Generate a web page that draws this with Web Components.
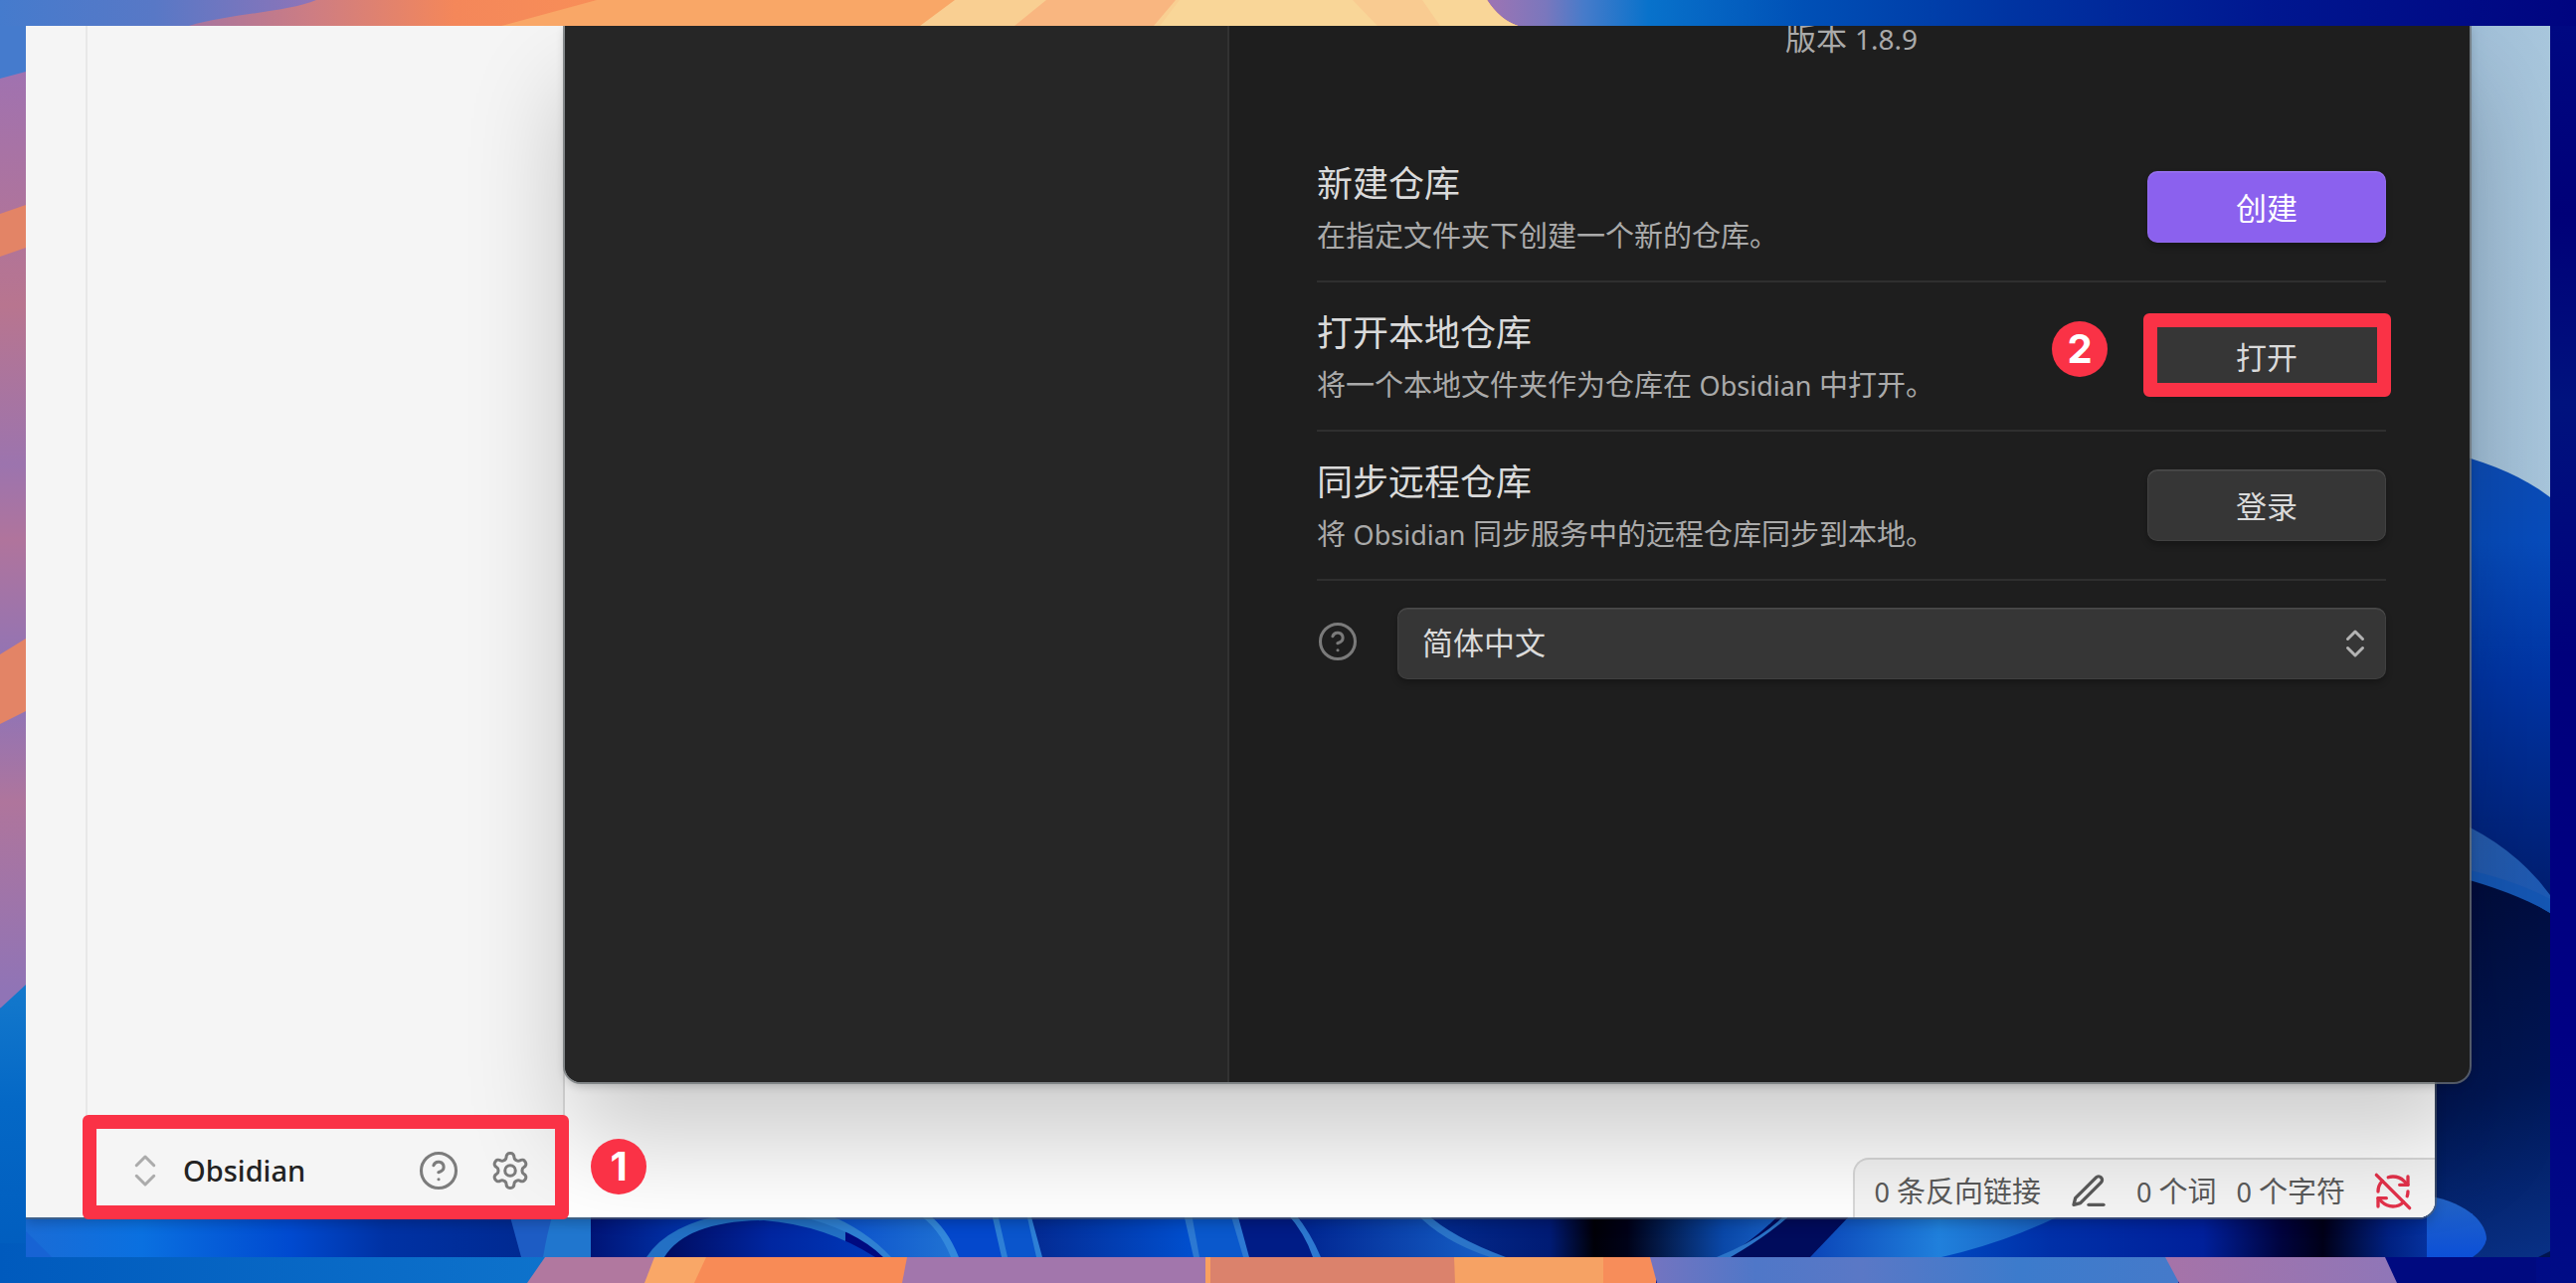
<!DOCTYPE html>
<html lang="zh-CN">
<head>
<meta charset="utf-8">
<title>Obsidian</title>
<style>
html, body { margin: 0; height: 100%; }
body { font-family: "Noto Sans", "Noto Sans CJK SC", sans-serif; overflow: hidden; background: #000a80; }
</style>
</head>
<body>
<desk-stage>
  <light-window slot="windows"></light-window>
  <vault-dialog slot="windows"></vault-dialog>
</desk-stage>

<script>
const ICONS = {
  updown: '<path d="m7 15 5 5 5-5"/><path d="m7 9 5-5 5 5"/>',
  help: '<circle cx="12" cy="12" r="10"/><path d="M9.09 9a3 3 0 0 1 5.83 1c0 2-3 3-3 3"/><path d="M12 17h.01"/>',
  settings: '<path d="M12.22 2h-.44a2 2 0 0 0-2 2v.18a2 2 0 0 1-1 1.73l-.43.25a2 2 0 0 1-2 0l-.15-.08a2 2 0 0 0-2.73.73l-.22.38a2 2 0 0 0 .73 2.73l.15.1a2 2 0 0 1 1 1.72v.51a2 2 0 0 1-1 1.74l-.15.09a2 2 0 0 0-.73 2.73l.22.38a2 2 0 0 0 2.73.73l.15-.08a2 2 0 0 1 2 0l.43.25a2 2 0 0 1 1 1.73V20a2 2 0 0 0 2 2h.44a2 2 0 0 0 2-2v-.18a2 2 0 0 1 1-1.73l.43-.25a2 2 0 0 1 2 0l.15.08a2 2 0 0 0 2.73-.73l.22-.39a2 2 0 0 0-.73-2.73l-.15-.08a2 2 0 0 1-1-1.74v-.5a2 2 0 0 1 1-1.74l.15-.09a2 2 0 0 0 .73-2.73l-.22-.38a2 2 0 0 0-2.73-.73l-.15.08a2 2 0 0 1-2 0l-.43-.25a2 2 0 0 1-1-1.73V4a2 2 0 0 0-2-2z"/><circle cx="12" cy="12" r="3"/>',
  pencil: '<path d="M12 20h9"/><path d="M16.5 3.5a2.12 2.12 0 0 1 3 3L7 19l-4 1 1-4Z"/>',
  syncoff: '<path d="M21 8L18.74 5.74A9.75 9.75 0 0 0 12 3C11 3 10.03 3.16 9.13 3.47"/><path d="M8 16H3v5"/><path d="M3 12C3 9.51 4 7.26 5.64 5.64"/><path d="m3 16 2.26 2.26A9.75 9.75 0 0 0 12 21c2.49 0 4.74-1 6.36-2.64"/><path d="M21 12c0 1-.16 1.97-.47 2.87"/><path d="M21 3v5h-5"/><path d="M22 22 2 2"/>'
};

function define(name, html, setup) {
  customElements.define(name, class extends HTMLElement {
    connectedCallback() {
      if (this.shadowRoot) return;
      const t = document.createElement('template');
      t.innerHTML = html;
      this.attachShadow({ mode: 'open' }).append(t.content.cloneNode(true));
      if (setup) setup(this, this.shadowRoot);
    }
  });
}

define('line-icon', `
<style>
:host { display: block; flex: none; width: var(--icon-size, 42px); height: var(--icon-size, 42px); }
svg { display: block; width: 100%; height: 100%; fill: none; stroke: currentColor; stroke-linecap: round; stroke-linejoin: round; }
</style>
<svg viewBox="0 0 24 24" aria-hidden="true"></svg>`, (el, root) => {
  const svg = root.querySelector('svg');
  svg.innerHTML = ICONS[el.getAttribute('name')];
  svg.setAttribute('stroke-width', el.getAttribute('stroke') || '1.75');
});

/* Step badge: red disc with its number slotted in */
define('step-badge', `
<style>
:host { display: flex; align-items: center; justify-content: center; width: 56px; height: 56px; border-radius: 50%;
  background: #fa3246; color: #fff; font: 700 40px/54px Inter, sans-serif; z-index: 5; }
</style>
<slot></slot>`);

/* Red outline drawn over the control it points at */
define('focus-frame', `
<style>
:host { display: block; box-sizing: border-box; border: 14px solid #fa3246; border-radius: 6px; pointer-events: none; z-index: 4; }
</style>`);

define('outer-wallpaper', `
<style>
:host { display: block; position: absolute; inset: 0; }
svg { display: block; width: 100%; height: 100%; }
</style>
<svg viewBox="0 0 2590 1290" preserveAspectRatio="none" aria-hidden="true">
  <defs>
    <linearGradient id="top" gradientUnits="userSpaceOnUse" x1="0" x2="2590" y1="0" y2="0">
      <stop offset="0" stop-color="#457bcd"/><stop offset=".06" stop-color="#5878c6"/><stop offset=".12" stop-color="#8d74b8"/>
      <stop offset=".58" stop-color="#9a74b4"/><stop offset=".6" stop-color="#7a77bd"/><stop offset=".615" stop-color="#467bca"/><stop offset=".64" stop-color="#0872cb"/>
      <stop offset=".7" stop-color="#0050b6"/><stop offset=".78" stop-color="#0034a2"/><stop offset=".88" stop-color="#001790"/><stop offset="1" stop-color="#000480"/>
    </linearGradient>
    <linearGradient id="sunset" gradientUnits="userSpaceOnUse" x1="190" x2="600" y1="0" y2="0">
      <stop offset="0" stop-color="#a6749f"/><stop offset=".3" stop-color="#cd7d83"/><stop offset=".65" stop-color="#f4875a"/><stop offset="1" stop-color="#f88e58"/>
    </linearGradient>
    <linearGradient id="leftp" x2="0" y2="1">
      <stop offset="0" stop-color="#a072b0"/><stop offset=".25" stop-color="#b8758f"/><stop offset=".42" stop-color="#9c74ae"/><stop offset=".5" stop-color="#b0749c"/>
      <stop offset=".66" stop-color="#8b74ba"/><stop offset=".78" stop-color="#af759c"/><stop offset=".98" stop-color="#9074b6"/>
    </linearGradient>
    <linearGradient id="leftb" x2="0" y2="1"><stop offset="0" stop-color="#1479cc"/><stop offset=".4" stop-color="#0468c6"/><stop offset="1" stop-color="#005bbd"/></linearGradient>
    <linearGradient id="rightb" x2="0" y2="1">
      <stop offset="0" stop-color="#000882"/><stop offset=".15" stop-color="#000078"/><stop offset=".3" stop-color="#00127e"/><stop offset=".5" stop-color="#00007c"/><stop offset=".8" stop-color="#000084"/><stop offset="1" stop-color="#000c86"/>
    </linearGradient>
    <linearGradient id="botb" x2="1" y2="0"><stop offset="0" stop-color="#005abd"/><stop offset="1" stop-color="#0e73cc"/></linearGradient>
    <linearGradient id="botc" x2="1" y2="0"><stop offset="0" stop-color="#7474c0"/><stop offset=".2" stop-color="#4f77c8"/><stop offset=".4" stop-color="#5a78c6"/><stop offset=".7" stop-color="#3c7bcc"/><stop offset="1" stop-color="#457aca"/></linearGradient>
    <linearGradient id="botp" x2="1" y2="0"><stop offset="0" stop-color="#a673a8"/><stop offset="1" stop-color="#8f76b8"/></linearGradient>
  </defs>
  <rect width="2590" height="40" fill="url(#top)"/>
  <path d="M318 0C290 12 230 14 190 26V40H1540L1526 26Q1508 20 1495 0Z" fill="url(#sunset)"/>
  <path d="M600 0 504 26V40H1540L1526 26Q1508 20 1495 0Z" fill="#f9a767"/>
  <path d="M960 0 925 26V40H1540L1526 26Q1508 20 1495 0Z" fill="#f9cf92"/>
  <path d="M1052 0 1020 26H1160L1182 0Z" fill="#f9b680"/>
  <path d="M1186 0 1166 26H1526Q1508 20 1495 0Z" fill="#f9d698"/>
  <path d="M1360 0 1385 26H1448L1430 0Z" fill="#f9cb91"/>
  <rect y="26" width="40" height="60" fill="#457bcd"/>
  <path d="M0 79 26 72H40V1000L0 1014Z" fill="url(#leftp)"/>
  <path d="M0 215 26 206V249L0 258ZM0 658 26 642V715L0 728Z" fill="#e38466"/>
  <path d="M0 1014 26 990H40V1290H0Z" fill="url(#leftb)"/>
  <rect x="2550" y="26" width="40" height="1264" fill="url(#rightb)"/>
  <rect y="1250" width="560" height="40" fill="url(#botb)"/>
  <path d="M548 1264H670V1290H530Z" fill="#b1789f"/>
  <path d="M658 1264H720V1290H648Z" fill="#f9a767"/>
  <path d="M710 1264H920V1290H698Z" fill="#f88b56"/>
  <path d="M912 1264H1213V1290H907Z" fill="#a276ac"/>
  <path d="M1212 1264H1463V1290H1212Z" fill="#db826c"/>
  <path d="M1212 1264H1217V1290H1212Z" fill="#f9a060"/>
  <path d="M1462 1264H1612V1290H1463Z" fill="#f6a264"/>
  <path d="M1612 1264H1665V1290H1612Z" fill="#f78d5a"/>
  <path d="M1659 1264H2190V1290H1666Z" fill="url(#botc)"/>
  <path d="M2177 1264H2398L2410 1290H2191Z" fill="url(#botp)"/>
</svg>`);

define('inner-wallpaper', `
<style>
:host { display: block; position: absolute; inset: 0; }
svg { display: block; width: 100%; height: 100%; }
</style>
<svg viewBox="26 26 2538 1238" preserveAspectRatio="none" aria-hidden="true">
  <defs>
    <linearGradient id="sky" x2="1" y2="0"><stop offset="0" stop-color="#8fafc9"/><stop offset=".5" stop-color="#a3c1d9"/><stop offset="1" stop-color="#a8c6dc"/></linearGradient>
    <linearGradient id="petal" x2="0" y2="1"><stop offset="0" stop-color="#0d4cb4"/><stop offset=".2" stop-color="#074cbc"/><stop offset=".5" stop-color="#0034a4"/><stop offset="1" stop-color="#001c6c"/></linearGradient>
    <linearGradient id="deep" gradientUnits="userSpaceOnUse" x1="2480" x2="2600" y1="880" y2="1290"><stop offset="0" stop-color="#000c3c"/><stop offset=".5" stop-color="#001654"/><stop offset="1" stop-color="#0a3690"/></linearGradient>
    <linearGradient id="streak" x2="1" y2="1"><stop offset="0" stop-color="#2a5ca8"/><stop offset="1" stop-color="#1c5ab6"/></linearGradient>
    <linearGradient id="b1" x2="1" y2="0"><stop offset="0" stop-color="#1a6cd6"/><stop offset=".22" stop-color="#0a70e0"/><stop offset=".5" stop-color="#004ad0"/><stop offset=".68" stop-color="#0032a4"/><stop offset="1" stop-color="#00288e"/></linearGradient>
    <linearGradient id="b2" x2="1" y2="0"><stop offset="0" stop-color="#000c60"/><stop offset=".5" stop-color="#0026a0"/><stop offset="1" stop-color="#0038b8"/></linearGradient>
    <linearGradient id="b3" x2="1" y2="0"><stop offset="0" stop-color="#001476"/><stop offset="1" stop-color="#0042c4"/></linearGradient>
    <linearGradient id="b4" x2="1" y2="0"><stop offset="0" stop-color="#0040c8"/><stop offset="1" stop-color="#2478d4"/></linearGradient>
    <linearGradient id="b5" x2="1" y2="0"><stop offset="0" stop-color="#042a92"/><stop offset="1" stop-color="#0050d0"/></linearGradient>
    <linearGradient id="b6" x2="1" y2="0"><stop offset="0" stop-color="#002490"/><stop offset="1" stop-color="#1866cc"/></linearGradient>
    <linearGradient id="b7" x2="1" y2="0"><stop offset="0" stop-color="#042c90"/><stop offset=".35" stop-color="#001b74"/><stop offset=".47" stop-color="#000008"/><stop offset=".56" stop-color="#000218"/><stop offset=".82" stop-color="#0a48a8"/><stop offset="1" stop-color="#1c66cc"/></linearGradient>
    <linearGradient id="b8" gradientUnits="userSpaceOnUse" x1="1952" x2="2500" y1="0" y2="0"><stop offset="0" stop-color="#0048c0"/><stop offset=".2" stop-color="#0030a8"/><stop offset=".48" stop-color="#00209a"/><stop offset=".62" stop-color="#000440"/><stop offset=".7" stop-color="#000018"/><stop offset=".82" stop-color="#002080"/><stop offset="1" stop-color="#0c4ccc"/></linearGradient>
    <linearGradient id="b9" x2="1" y2="0"><stop offset="0" stop-color="#0b45b8"/><stop offset=".5" stop-color="#2080dc"/><stop offset="1" stop-color="#1658b8"/></linearGradient>
    <linearGradient id="b10" x2="0" y2="1"><stop offset="0" stop-color="#2464c4"/><stop offset="1" stop-color="#0c50d8"/></linearGradient>
  </defs>
  <rect x="2440" y="26" width="124" height="500" fill="url(#sky)"/>
  <path d="M2440 450Q2520 466 2564 500V920H2440Z" fill="url(#petal)"/>
  <path d="M2440 860 2564 912V1264H2440Z" fill="url(#deep)"/>
  <path d="M2440 814Q2520 840 2564 900V918Q2520 890 2440 872Z" fill="url(#streak)"/>
  <path d="M2440 866Q2520 880 2564 904V918Q2520 892 2440 874Z" fill="#1557b4"/>
  <rect x="26" y="1220" width="530" height="44" fill="url(#b1)"/>
  <path d="M26 1238 52 1264H26Z" fill="#1763d4"/>
  <path d="M512 1220H600V1264H524Z" fill="#1d5cc4"/>
  <path d="M556 1220H600V1264H546Q550 1240 556 1220Z" fill="#2076ce"/>
  <rect x="594" y="1220" width="140" height="44" fill="url(#b3)"/>
  <path d="M650 1264Q672 1230 735 1220H850V1264Z" fill="#2370c4"/>
  <path d="M800 1222Q850 1226 892 1264H980V1220H780Z" fill="url(#b4)"/>
  <path d="M668 1264Q690 1228 768 1227Q830 1232 880 1264Z" fill="url(#b2)"/>
  <path d="M800 1222Q860 1236 888 1264H896Q870 1236 830 1220Z" fill="#2f80d2"/>
  <path d="M922 1220H1005L1010 1264H962Q946 1234 922 1220Z" fill="#0448cc"/>
  <path d="M922 1220Q944 1234 956 1264H964Q952 1234 932 1220Z" fill="#3388dc"/>
  <path d="M998 1220H1040L1048 1264H1010Z" fill="#0a55cc"/>
  <path d="M997 1220 1007 1264H1013L1003 1220ZM1032 1220 1042 1264H1049L1038 1220Z" fill="#2d7fd6"/>
  <path d="M1036 1220H1196L1202 1264H1048Z" fill="url(#b5)"/>
  <path d="M1196 1220H1246L1256 1264H1204Z" fill="#0a58cc"/>
  <path d="M1190 1220 1200 1264H1206L1198 1220ZM1237 1220 1250 1264H1258L1244 1220Z" fill="#2c78d2"/>
  <path d="M1244 1220H1300L1326 1264H1256Z" fill="#001c86"/>
  <path d="M1304 1220H1440Q1460 1244 1520 1264H1326Z" fill="url(#b6)"/>
  <path d="M1294 1220Q1312 1240 1320 1264H1328Q1318 1240 1302 1220Z" fill="#2d78d0"/>
  <path d="M1428 1220H1800V1264H1512Q1450 1244 1428 1220Z" fill="url(#b7)"/>
  <path d="M1424 1220Q1450 1248 1498 1264H1514Q1460 1244 1434 1220Z" fill="#2b74c8"/>
  <path d="M1790 1220Q1768 1244 1734 1264H1960V1220Z" fill="#000c5c"/>
  <path d="M1796 1220Q1772 1246 1726 1264H1740Q1778 1242 1802 1220Z" fill="#2b74c8"/>
  <path d="M1862 1220H2080V1264H1820Z" fill="url(#b9)"/>
  <path d="M2076 1220H2486V1264H1952Q2020 1248 2076 1220Z" fill="url(#b8)"/>
  <path d="M2440 1202C2485 1210 2500 1232 2500 1246Q2498 1256 2486 1264H2440Z" fill="url(#b10)"/>
  <path d="M2552 1264 2564 1258V1264Z" fill="#001450"/>
</svg>`);

define('desk-stage', `
<style>
:host { display: flex; position: relative; box-sizing: border-box; height: 100vh; padding: 26px; }
.screen { flex: 1; display: flex; position: relative; overflow: hidden; }
</style>
<outer-wallpaper></outer-wallpaper>
<div class="screen">
  <inner-wallpaper></inner-wallpaper>
  <slot name="windows"></slot>
</div>`);

define('status-bar', `
<style>
:host { display: flex; align-items: center; align-self: flex-end; box-sizing: border-box; height: 60px; padding: 6px 22px 0 20px;
  background: #f5f5f5; border: solid #d9d9d9; border-width: 2px 0 0 2px; border-top-left-radius: 16px;
  color: #5a5a5a; font-size: 29px; line-height: 40px; white-space: nowrap; --icon-size: 40px; }
.lat { font-size: 27px; }
.words { margin-left: 28px; }
.chars { margin-left: 20px; }
line-icon { margin-left: 28px; }
.sync { color: #e4314a; }
</style>
<span><span class="lat">0 </span>条反向链接</span>
<line-icon name="pencil" stroke="2"></line-icon>
<span class="words"><span class="lat">0 </span>个词</span>
<span class="chars"><span class="lat">0 </span>个字符</span>
<line-icon class="sync" name="syncoff" stroke="2"></line-icon>`);

define('vault-switcher', `
<style>
:host { display: flex; align-items: center; height: 94px; padding: 0 32px 0 37px; color: #7c7c7c; }
button { all: unset; display: flex; align-items: center; cursor: pointer; }
.vault { flex: 1; gap: 17px; color: #222; font-size: 29px; line-height: 40px; font-weight: 500; }
.vault line-icon { color: #ababab; }
.tools { display: flex; gap: 30px; }
</style>
<button class="vault"><line-icon name="updown"></line-icon><span>Obsidian</span></button>
<div class="tools">
  <button aria-label="帮助"><line-icon name="help"></line-icon></button>
  <button aria-label="设置"><line-icon name="settings"></line-icon></button>
</div>`);

define('light-window', `
<style>
:host { display: flex; flex: 1; position: relative; margin: 0 116px 40px 0; background: #fff; border-bottom-right-radius: 16px;
  box-shadow: 0 0 0 2px rgba(90,100,110,.6), 0 6px 12px rgba(0,0,0,.2); }
.clip { flex: 1; display: flex; overflow: hidden; border-bottom-right-radius: 16px; }
.ribbon { width: 60px; background: #f5f5f5; border-right: 2px solid #e8e8e8; }
.side { width: 480px; display: flex; flex-direction: column; justify-content: flex-end; background: #f5f5f5; border-right: 2px solid #dcdcdc; box-sizing: border-box; }
.main { flex: 1; display: flex; justify-content: flex-end; background: #fff; }
</style>
<div class="clip">
  <div class="ribbon"></div>
  <div class="side"><vault-switcher></vault-switcher></div>
  <div class="main"><status-bar></status-bar></div>
</div>`);

define('push-button', `
<style>
:host { display: block; }
button { display: block; box-sizing: border-box; width: 240px; height: 72px; margin: 0; padding: 0; border: 0; border-radius: 10px;
  background: #363636; color: #dadada; font: 400 31px/72px "Noto Sans CJK SC", sans-serif; cursor: pointer;
  box-shadow: inset 0 2px 0 rgba(255,255,255,.06), inset 0 0 0 1px rgba(255,255,255,.06), 0 4px 6px rgba(0,0,0,.25); }
:host([primary]) button { background: #8b61ee; color: #fff; }
</style>
<button><slot></slot></button>`);

define('setting-row', `
<style>
:host { display: flex; align-items: center; justify-content: space-between; box-sizing: border-box; height: 150px; border-bottom: 2px solid #2f2f2f; }
.info { display: flex; flex-direction: column; padding-top: 8px; }
.name { color: #dadada; font-size: 36px; line-height: 50px; }
.desc { color: #aaa; font-size: 29px; line-height: 54px; }
.control { position: relative; }
::slotted(b) { font-weight: 400; font-size: 27px; }
</style>
<div class="info">
  <div class="name"><slot name="name"></slot></div>
  <div class="desc"><slot></slot></div>
</div>
<div class="control"><slot name="control"></slot></div>`);

define('language-picker', `
<style>
:host { display: flex; align-items: center; gap: 39px; padding-top: 27px; }
label { display: block; padding-bottom: 4px; color: #7a7a7a; }
.box { flex: 1; display: grid; align-items: center; }
select { grid-area: 1 / 1; appearance: none; box-sizing: border-box; width: 100%; height: 72px; margin: 0; padding: 0 27px 4px 25px; border: 0; border-radius: 10px;
  background: #363636; color: #dadada; font: 400 31px/68px "Noto Sans CJK SC", sans-serif;
  box-shadow: inset 0 2px 0 rgba(255,255,255,.06), inset 0 0 0 1px rgba(255,255,255,.05), 0 4px 6px rgba(0,0,0,.25); }
.arrow { grid-area: 1 / 1; justify-self: end; margin-right: 13px; color: #b3b3b3; pointer-events: none; --icon-size: 36px; }
</style>
<label for="lang" aria-label="语言"><line-icon name="help"></line-icon></label>
<div class="box">
  <select id="lang"><option>简体中文</option></select>
  <line-icon class="arrow" name="updown" stroke="2"></line-icon>
</div>`);

define('vault-dialog', `
<style>
:host { display: block; position: absolute; inset: 0; }
.window { display: flex; position: absolute; left: 542px; right: 81px; top: 0; bottom: 176px; background: #1e1e1e; border-radius: 0 0 16px 16px;
  box-shadow: 0 0 0 2px rgba(110,115,118,.75), 0 4px 10px rgba(0,0,0,.2), 0 60px 100px rgba(0,0,0,.2); }
.list { width: 668px; box-sizing: border-box; background: #262626; border-right: 2px solid #323232; border-bottom-left-radius: 16px; }
.main { flex: 1; display: flex; flex-direction: column; padding: 0 84px 0 88px; }
.version { align-self: center; height: 24px; margin-bottom: 84px; color: #aaa; font-size: 31px; line-height: 24px; }
.version span { font-size: 28px; }
.target { position: relative; }
.target focus-frame { position: absolute; inset: -7px -5px -5px -4px; }
.target step-badge { position: absolute; left: -96px; top: 1px; }
.mark { position: absolute; left: 57px; bottom: 38px; width: 489px; height: 105px; }
.step { position: absolute; left: 568px; bottom: 63px; }
b { font-weight: 400; font-size: 27px; }
</style>
<div class="window">
  <div class="list"></div>
  <div class="main">
    <div class="version">版本 <span>1.8.9</span></div>
    <setting-row>
      <span slot="name">新建仓库</span>在指定文件夹下创建一个新的仓库。
      <push-button slot="control" primary>创建</push-button>
    </setting-row>
    <setting-row>
      <span slot="name">打开本地仓库</span>将一个本地文件夹作为仓库在 <b>Obsidian</b> 中打开。
      <div slot="control" class="target"><push-button>打开</push-button><focus-frame></focus-frame><step-badge>2</step-badge></div>
    </setting-row>
    <setting-row>
      <span slot="name">同步远程仓库</span>将 <b>Obsidian</b> 同步服务中的远程仓库同步到本地。
      <push-button slot="control">登录</push-button>
    </setting-row>
    <language-picker></language-picker>
  </div>
</div>
<focus-frame class="mark"></focus-frame>
<step-badge class="step">1</step-badge>`);
</script>
</body>
</html>
